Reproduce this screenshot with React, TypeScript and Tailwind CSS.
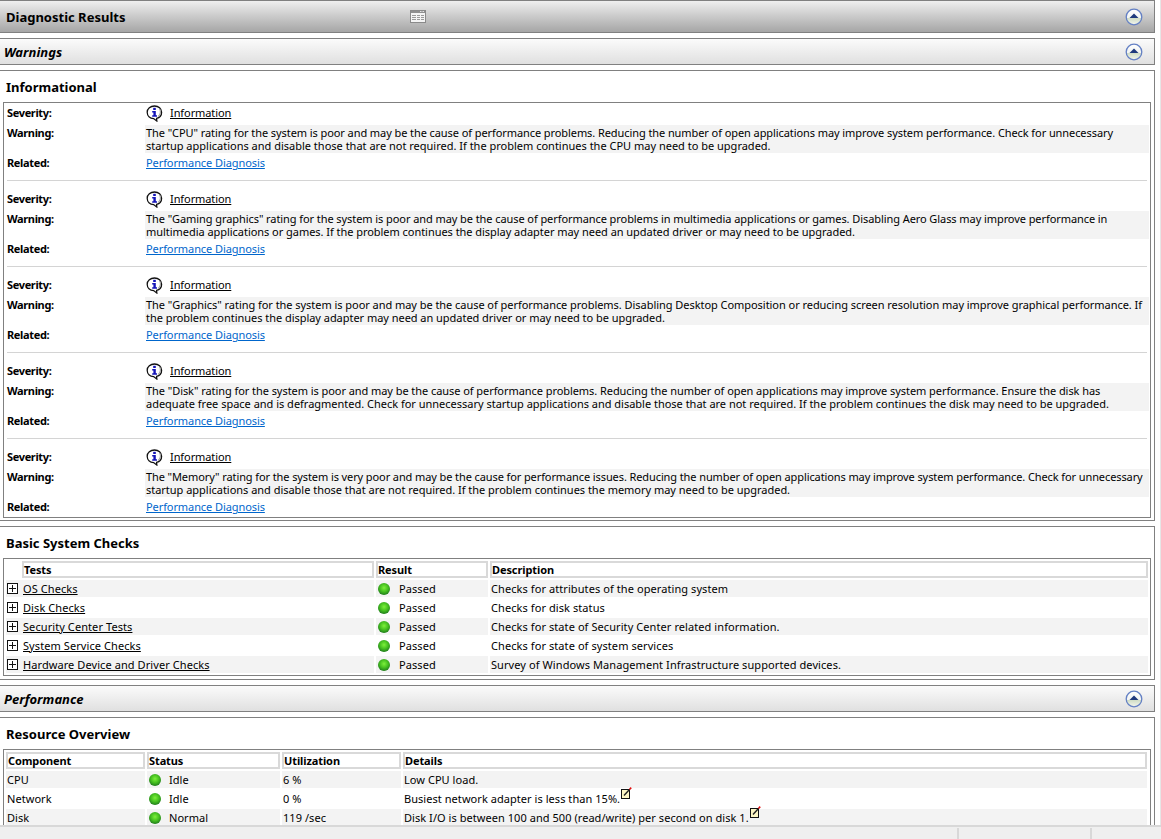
import React from 'react';

const warnings = [
  [
    ['The "CPU" rating for the system is poor and may be the cause of performance problems. Reducing the number of open applications may improve system performance. Check for unnecessary', 'tracking-[-0.08px]'],
    ['startup applications and disable those that are not required. If the problem continues the CPU may need to be upgraded.', 'tracking-[0px]'],
  ],
  [
    ['The "Gaming graphics" rating for the system is poor and may be the cause of performance problems in multimedia applications or games. Disabling Aero Glass may improve performance in', 'tracking-[-0.075px]'],
    ['multimedia applications or games. If the problem continues the display adapter may need an updated driver or may need to be upgraded.', 'tracking-[-0.04px]'],
  ],
  [
    ['The "Graphics" rating for the system is poor and may be the cause of performance problems. Disabling Desktop Composition or reducing screen resolution may improve graphical performance. If', 'tracking-[-0.045px]'],
    ['the problem continues the display adapter may need an updated driver or may need to be upgraded.', 'tracking-[-0.035px]'],
  ],
  [
    ['The "Disk" rating for the system is poor and may be the cause of performance problems. Reducing the number of open applications may improve system performance. Ensure the disk has', 'tracking-[-0.06px]'],
    ['adequate free space and is defragmented. Check for unnecessary startup applications and disable those that are not required. If the problem continues the disk may need to be upgraded.', 'tracking-[-0.01px]'],
  ],
  [
    ['The "Memory" rating for the system is very poor and may be the cause for performance issues. Reducing the number of open applications may improve system performance. Check for unnecessary', 'tracking-[-0.1px]'],
    ['startup applications and disable those that are not required. If the problem continues the memory may need to be upgraded.', 'tracking-[-0.02px]'],
  ],
];

const checks = [
  ['OS Checks', 'Checks for attributes of the operating system'],
  ['Disk Checks', 'Checks for disk status'],
  ['Security Center Tests', 'Checks for state of Security Center related information.'],
  ['System Service Checks', 'Checks for state of system services'],
  ['Hardware Device and Driver Checks', 'Survey of Windows Management Infrastructure supported devices.'],
];

const resources = [
  { name: 'CPU', status: 'Idle', use: '6 %', details: 'Low CPU load.', note: false },
  { name: 'Network', status: 'Idle', use: '0 %', details: 'Busiest network adapter is less than 15%.', note: true },
  { name: 'Disk', status: 'Normal', use: '119 /sec', details: 'Disk I/O is between 100 and 500 (read/write) per second on disk 1.', note: true },
];

const CollapseIcon = () => (
  <svg width="18" height="18" viewBox="0 0 18 18" className="shrink-0">
    <defs>
      <linearGradient id="collapseFill" x1="0" y1="0" x2="0" y2="1">
        <stop offset="0" stopColor="#ffffff" />
        <stop offset="0.55" stopColor="#f2f4f2" />
        <stop offset="0.56" stopColor="#cfdcc4" />
        <stop offset="1" stopColor="#f4f6ee" />
      </linearGradient>
    </defs>
    <circle cx="9" cy="9" r="7.8" fill="url(#collapseFill)" stroke="#6480c4" strokeWidth="1.3" />
    <path d="M9 5.5 L13.5 10 H4.5 Z" fill="#1f3a7d" />
  </svg>
);

const TableIcon = () => (
  <svg width="16" height="13" viewBox="0 0 16 13">
    <rect x="0.5" y="0.5" width="15" height="12" fill="#f4f4f4" stroke="#8a8a8a" />
    <rect x="1" y="1" width="14" height="2" fill="#8f8f8f" />
    <rect x="10" y="1" width="1.5" height="1" fill="#e5e5e5" />
    <rect x="12.5" y="1" width="1.5" height="1" fill="#e5e5e5" />
    <path d="M2 5.5H6M7 5.5H10M11 5.5H14M2 7.5H6M7 7.5H10M11 7.5H14M2 9.5H6M7 9.5H10M11 9.5H14" stroke="#9a9a9a" />
  </svg>
);

const InfoIcon = () => (
  <svg width="17" height="17" viewBox="0 0 17 17" className="shrink-0">
    <path d="M8.5 1 C12.6 1 15.6 3.6 15.6 7.3 C15.6 10.6 13.2 12.9 10.6 13.4 L10.8 16 L7.6 13.6 C3.9 13.4 1.2 10.8 1.2 7.3 C1.2 3.6 4.4 1 8.5 1 Z" fill="#ffffff" stroke="#111111" strokeWidth="1.3" />
    <path d="M13.6 4 C15 6 14.8 9.6 12.2 11.4" fill="none" stroke="#a0a0a0" strokeWidth="1.2" />
    <rect x="7.2" y="2.8" width="2.6" height="2.2" fill="#1414b8" />
    <path d="M6.2 6 H9.8 V10.2 H11 V11.8 H6.2 V10.2 H7.4 V7.5 H6.2 Z" fill="#1414b8" />
  </svg>
);

const GreenBall = () => (
  <span className="block w-[12px] h-[12px] shrink-0 rounded-full bg-[radial-gradient(circle_at_50%_40%,_#7df03c_0%,_#46c020_42%,_#1f7a1c_78%,_#154a17_100%)]" />
);

const PlusBox = () => (
  <svg width="11" height="11" viewBox="0 0 11 11" className="shrink-0">
    <rect x="0.5" y="0.5" width="10" height="10" fill="#ffffff" stroke="#111111" />
    <path d="M2 5.5H9M5.5 2V9" stroke="#111111" />
  </svg>
);

const NoteIcon = () => (
  <svg width="11" height="12" viewBox="0 0 11 12" className="shrink-0 ml-[1px] -mt-[3px]">
    <rect x="0.5" y="2.5" width="8" height="9" fill="#fdf6c4" stroke="#111111" />
    <path d="M3 8.5 L8.5 2.5" stroke="#222222" strokeWidth="1.4" />
    <path d="M8.5 2.5 L10.2 0.6" stroke="#e01010" strokeWidth="1.6" />
  </svg>
);

const Bar = ({ title, main }: { title: string; main?: boolean }) =>
  main ? (
    <div className="relative shrink-0 flex items-center justify-between h-[33px] pl-[6px] pr-[11px] border-t border-b border-r border-[#808080] bg-gradient-to-b from-[#efefef] to-[#a6a6a6]">
      <span className="pt-[2px] text-[13px] font-bold text-black">{title}</span>
      <span className="absolute left-[410px] top-[9px]">
        <TableIcon />
      </span>
      <CollapseIcon />
    </div>
  ) : (
    <div className="shrink-0 flex items-center justify-between h-[27px] pl-[4px] pr-[11px] border-t border-b border-r border-[#808080] bg-gradient-to-b from-[#fbfbfb] to-[#e0e0e0]">
      <span className="pt-[2px] text-[13px] font-bold italic text-black">{title}</span>
      <CollapseIcon />
    </div>
  );

const Panel = ({ title, children, className }: { title: string; children: React.ReactNode; className: string }) => (
  <div className={`border-t border-b border-r border-[#808080] bg-white ${className}`}>
    <div className="h-[31px] pl-[6px] pt-[7px] text-[13px] leading-[18px] font-bold text-black">{title}</div>
    {children}
  </div>
);

const Th = ({ label, className }: { label: string; className?: string }) => (
  <div className={`h-[17px] border-2 border-[#d9d9d9] text-[11px] leading-[13px] font-bold tracking-[-0.1px] text-black ${className ?? ''}`}>
    {label}
  </div>
);

export default function App() {
  return (
    <div className="flex flex-col w-[1161px] h-[839px] overflow-hidden bg-white font-['Noto_Sans',sans-serif] text-[11px] text-black">
      <div className="flex flex-1 min-h-0">
        <div className="w-[1155px] shrink-0 flex flex-col overflow-hidden">
          <Bar title="Diagnostic Results" main />
          <div className="mt-[5px] shrink-0">
            <Bar title="Warnings" />
          </div>

          <Panel title="Informational" className="mt-[5px] shrink-0 pb-[2px]">
            <div className="ml-[3px] mr-[3px] border border-[#808080] tracking-[-0.085px]">
              {warnings.map((lines, i) => (
                <div key={i}>
                  <div className="grid grid-cols-[138px_1fr] pl-[3px] pr-[1px]">
                    <div className="h-[20px] font-bold leading-[20px] tracking-[-0.35px]">Severity:</div>
                    <div className="h-[20px] flex items-center gap-[7px] pl-[1px]">
                      <InfoIcon />
                      <span className="underline">Information</span>
                    </div>
                    <div className="mt-[2px] pt-[1px] font-bold leading-[13px] tracking-[-0.35px]">Warning:</div>
                    <div className="mt-[2px] h-[28px] bg-[#f3f3f3] pl-[1px] pt-[1px] leading-[13px] whitespace-nowrap">
                      {lines.map(([line, spacing]) => (
                        <div key={line} className={spacing}>
                          {line}
                        </div>
                      ))}
                    </div>
                    <div className="h-[20px] font-bold leading-[20px] tracking-[-0.35px]">Related:</div>
                    <div className="h-[20px] pl-[1px] leading-[20px] text-[#0066cc] underline">Performance Diagnosis</div>
                  </div>
                  {i < warnings.length - 1 && <div className="mt-[7px] mb-[8px] ml-[3px] mr-[3px] h-px bg-[#d4d4d4]" />}
                </div>
              ))}
            </div>
          </Panel>

          <Panel title="Basic System Checks" className="mt-[5px] shrink-0 pb-[3px]">
            <div className="ml-[3px] mr-[3px] border border-[#808080] pl-[2px] pt-[2px] pb-[2px]">
              <div className="grid grid-cols-[368px_112px_658px] gap-x-[2px] gap-y-[2px] tracking-[0.08px]">
                <Th label="Tests" className="ml-[16px]" />
                <Th label="Result" />
                <Th label="Description" />
                {checks.map(([test, desc], i) => {
                  const bg = i % 2 === 0 ? 'bg-[#f3f3f3]' : 'bg-white';
                  return (
                    <React.Fragment key={test}>
                      <div className={`h-[17px] flex items-center gap-[5px] pl-[1px] leading-[18px] ${bg}`}>
                        <PlusBox />
                        <span className="underline">{test}</span>
                      </div>
                      <div className={`h-[17px] flex items-center gap-[9px] pl-[2px] leading-[18px] ${bg}`}>
                        <GreenBall />
                        <span>Passed</span>
                      </div>
                      <div className={`h-[17px] pl-[1px] leading-[17px] ${bg}`}>{desc}</div>
                    </React.Fragment>
                  );
                })}
              </div>
            </div>
          </Panel>

          <div className="mt-[5px] shrink-0">
            <Bar title="Performance" />
          </div>

          <Panel title="Resource Overview" className="mt-[5px] shrink-0">
            <div className="ml-[3px] mr-[3px] border border-[#808080] pl-[2px] pt-[2px] pb-[2px]">
              <div className="grid grid-cols-[139px_133px_119px_744px] gap-x-[2px] gap-y-[2px] tracking-[0.05px]">
                <Th label="Component" />
                <Th label="Status" />
                <Th label="Utilization" />
                <Th label="Details" />
                {resources.map((r, i) => {
                  const bg = i % 2 === 0 ? 'bg-[#f3f3f3]' : 'bg-white';
                  return (
                    <React.Fragment key={r.name}>
                      <div className={`h-[17px] pl-[1px] leading-[17px] ${bg}`}>{r.name}</div>
                      <div className={`h-[17px] flex items-center gap-[8px] pl-[2px] leading-[18px] ${bg}`}>
                        <GreenBall />
                        <span>{r.status}</span>
                      </div>
                      <div className={`h-[17px] pl-[1px] leading-[17px] ${bg}`}>{r.use}</div>
                      <div className={`h-[17px] flex items-start pl-[1px] leading-[17px] whitespace-nowrap ${bg}`}>
                        <span>{r.details}</span>
                        {r.note && <NoteIcon />}
                      </div>
                    </React.Fragment>
                  );
                })}
              </div>
            </div>
          </Panel>
        </div>
        <div className="flex-1 bg-white border-r border-[#e6e6e6]" />
      </div>

      <div className="relative z-10 h-[14px] shrink-0 border-t-2 border-[#d8d8d8] bg-[#efefef] pt-[1px]">
        <div className="flex h-full">
          <div className="w-[959px] border-r-2 border-[#d8d8d8]" />
          <div className="w-[133px] border-r-2 border-[#d8d8d8]" />
        </div>
      </div>
    </div>
  );
}
